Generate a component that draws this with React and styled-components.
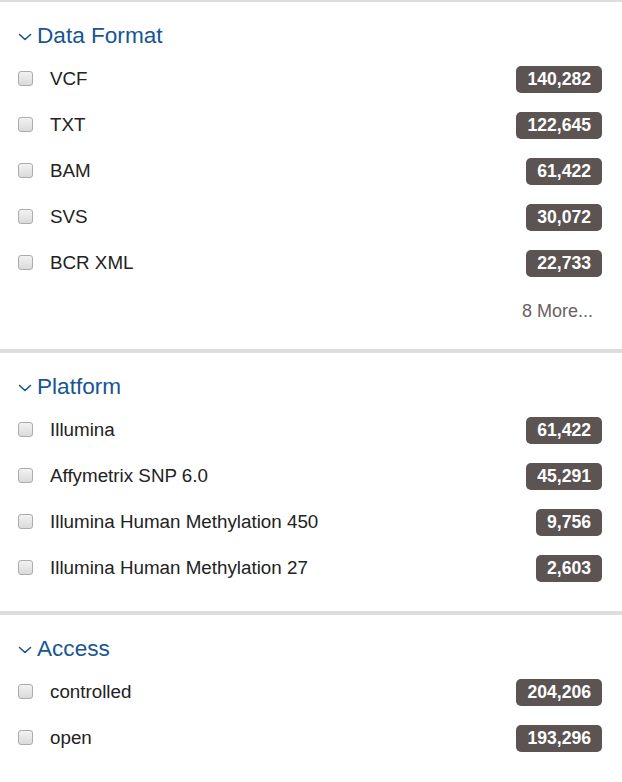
import React from 'react'
import styled, { createGlobalStyle } from 'styled-components'

const GlobalStyle = createGlobalStyle`
  html, body {
    margin: 0;
    padding: 0;
    background: #fff;
  }
  body {
    font-family: "Liberation Sans", Arial, sans-serif;
    color: #222;
  }
`

const facets = [
  {
    title: 'Data Format',
    top: 2,
    more: '8 More...',
    items: [
      ['VCF', '140,282'],
      ['TXT', '122,645'],
      ['BAM', '61,422'],
      ['SVS', '30,072'],
      ['BCR XML', '22,733'],
    ],
  },
  {
    title: 'Platform',
    items: [
      ['Illumina', '61,422'],
      ['Affymetrix SNP 6.0', '45,291'],
      ['Illumina Human Methylation 450', '9,756'],
      ['Illumina Human Methylation 27', '2,603'],
    ],
  },
  {
    title: 'Access',
    items: [
      ['controlled', '204,206'],
      ['open', '193,296'],
    ],
  },
]

function Chevron() {
  return (
    <svg width="14" height="8" viewBox="0 0 14 8" fill="none">
      <path d="M1.5 1.5 L7 6.5 L12.5 1.5" stroke="#175692" strokeWidth="1.6" strokeLinecap="round" strokeLinejoin="round" />
    </svg>
  )
}

function App() {
  return (
    <>
      <GlobalStyle />
      <Panel>
        {facets.map((facet) => (
          <Section key={facet.title} $border={facet.top || 4}>
            <Title>
              <Chevron />
              <span>{facet.title}</span>
            </Title>
            {facet.items.map(([label, count]) => (
              <Row key={label}>
                <Check />
                <Label>{label}</Label>
                <Badge>{count}</Badge>
              </Row>
            ))}
            {facet.more && <More>{facet.more}</More>}
          </Section>
        ))}
      </Panel>
    </>
  )
}

const Panel = styled.div`
  width: 622px;
  display: flex;
  flex-direction: column;
`

const Section = styled.section`
  border-top: ${(p) => p.$border}px solid #dddddd;
  padding: 19px 20px 20px 18px;
  display: flex;
  flex-direction: column;
`

const Title = styled.div`
  display: flex;
  align-items: center;
  gap: 5px;
  height: 30px;
  margin-bottom: 5px;
  color: #175692;
  font-size: 22.6px;
  svg {
    margin-top: 2px;
  }
`

const Row = styled.div`
  display: flex;
  align-items: center;
  height: 46px;
`

const Check = styled.span`
  flex: none;
  width: 15px;
  height: 15px;
  margin-top: -1px;
  box-sizing: border-box;
  border: 1px solid #acacac;
  border-radius: 3px;
  background: linear-gradient(#f2f2f2, #dadada);
`

const Label = styled.span`
  flex: 1;
  margin-left: 17px;
  font-size: 18.8px;
  color: #222;
`

const Badge = styled.span`
  flex: none;
  height: 27px;
  line-height: 27px;
  padding: 0 11px;
  border-radius: 5px;
  background: #5c5353;
  color: #fff;
  font-weight: bold;
  font-size: 17.6px;
`

const More = styled.div`
  align-self: flex-end;
  margin-top: 7px;
  margin-right: 9px;
  line-height: 36px;
  font-size: 18px;
  color: #6a6262;
`

export default App
